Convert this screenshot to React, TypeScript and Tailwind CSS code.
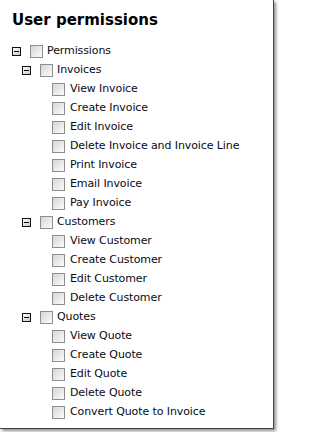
const tree = [
  {
    label: "Invoices",
    items: [
      "View Invoice",
      "Create Invoice",
      "Edit Invoice",
      "Delete Invoice and Invoice Line",
      "Print Invoice",
      "Email Invoice",
      "Pay Invoice",
    ],
  },
  {
    label: "Customers",
    items: ["View Customer", "Create Customer", "Edit Customer", "Delete Customer"],
  },
  {
    label: "Quotes",
    items: ["View Quote", "Create Quote", "Edit Quote", "Delete Quote", "Convert Quote to Invoice"],
  },
];

function Toggle() {
  return (
    <span className="relative flex h-[9px] w-[9px] shrink-0 items-center justify-center border border-[#111] bg-gradient-to-br from-white to-[#c8c8c8]">
      <span className="h-px w-[5px] bg-black" />
    </span>
  );
}

function Box() {
  return (
    <span className="mr-[4px] h-[13px] w-[13px] shrink-0 border border-[#8e8e8e] bg-gradient-to-br from-[#d6d6d6] to-[#fbfbfb]" />
  );
}

function Row({ children }: { children: React.ReactNode }) {
  return <div className="flex h-[19px] items-center">{children}</div>;
}

export default function App() {
  return (
    <div className="h-[432px] w-[277px] bg-white">
      <div
        className="h-[429px] w-[274px] border-r border-b border-[#444] bg-white pl-[12px] pt-[10px] text-[#0a0a14] shadow-[2px_2px_3px_rgba(0,0,0,0.45)]"
        style={{ fontFamily: '"DejaVu Sans", Verdana, sans-serif' }}
      >
        <h1 className="text-[15px] font-bold leading-[20px] text-black">User permissions</h1>
        <div className="mt-[12px] text-[11px] tracking-[-0.1px]">
          <Row>
            <Toggle />
            <span className="w-[9px]" />
            <Box />
            <span>Permissions</span>
          </Row>
          <div className="pl-[10px]">
            {tree.map((group) => (
              <div key={group.label}>
                <Row>
                  <Toggle />
                  <span className="w-[9px]" />
                  <Box />
                  <span>{group.label}</span>
                </Row>
                <div className="pl-[30px]">
                  {group.items.map((item) => (
                    <Row key={item}>
                      <Box />
                      <span className="pl-[1px]">{item}</span>
                    </Row>
                  ))}
                </div>
              </div>
            ))}
          </div>
        </div>
      </div>
    </div>
  );
}
